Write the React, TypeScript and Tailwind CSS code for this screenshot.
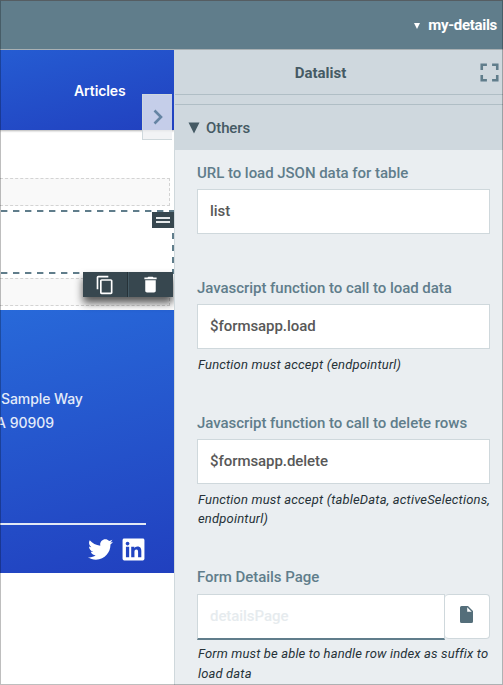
import { ReactNode } from "react";
import { FaLinkedin, FaTwitter } from "react-icons/fa";
import { MdContentCopy, MdDelete, MdFullscreen } from "react-icons/md";

function PlaceholderRow({ className }: { className: string }) {
  return (
    <div className={`w-[170px] border border-l-0 border-dashed border-[#d3d3d3] bg-[#f9f9f9] ${className}`} />
  );
}

function SelectedBlock() {
  return (
    <div className="relative mt-[4px] h-[64px] w-[174px]">
      <div className="absolute inset-x-0 top-0 h-[2px] bg-[repeating-linear-gradient(90deg,transparent_0_1px,#607d8b_1px_7px,#c3ced4_7px_8px,transparent_8px_12px)]" />
      <div className="absolute inset-x-0 bottom-0 h-[2px] bg-[repeating-linear-gradient(90deg,transparent_0_1px,#607d8b_1px_7px,#c3ced4_7px_8px,transparent_8px_12px)]" />
      <div className="absolute inset-y-0 right-0 w-[2px] bg-[repeating-linear-gradient(180deg,#607d8b_0_5px,transparent_5px_11px,#607d8b_11px_12px)]" />
      <div className="absolute top-[2px] right-0 flex h-[16px] w-[22px] flex-col items-center justify-center gap-[2px] bg-[#37474f]">
        <div className="h-[2px] w-[14px] bg-[#e6e9ea]" />
        <div className="h-[2px] w-[14px] bg-[#e6e9ea]" />
      </div>
      <div className="absolute top-[62px] right-[1px] z-10 flex h-[25px] w-[90px] bg-[#37474f] text-white shadow-[0_6px_9px_rgba(0,0,0,0.65)]">
        <div className="flex w-[45px] items-center justify-center border-r border-[#263238]">
          <MdContentCopy size={20} />
        </div>
        <div className="flex w-[45px] items-center justify-center border-l border-[#455a64] pr-[2px]">
          <MdDelete size={21} />
        </div>
      </div>
    </div>
  );
}

function Canvas() {
  return (
    <div className="relative w-[174px] shrink-0 overflow-hidden bg-white font-['Inter',sans-serif]">
      <div className="flex h-[80px] items-center bg-[linear-gradient(165deg,#255cd2_0%,#2140bf_100%)] pl-[74px] text-[14px] font-semibold tracking-[-0.1px] text-white shadow-[0_1px_2px_rgba(0,0,0,0.3)]">
        <span>Articles</span>
      </div>
      <div className="absolute top-[44px] left-[142px] flex h-[46px] w-[30px] items-center justify-center border border-r-0 border-[#cfd8dc] bg-[#eff0f2]/80">
        <svg width="10" height="16" viewBox="0 0 10 16" fill="none" stroke="#6584a3" strokeWidth="2.6">
          <path d="M1.500 1.500 8 8l-6.500 6.500" />
        </svg>
      </div>
      <PlaceholderRow className="mt-[48px] h-[28px]" />
      <SelectedBlock />
      <PlaceholderRow className="mt-[4px] h-[28px]" />
      <div className="mt-[4px] h-[263px] bg-[linear-gradient(165deg,#2869d9_0%,#2140bf_100%)] text-[14px] text-[#e3ebf9]">
        <div className="h-[213px] pt-[77px] leading-[24px] font-medium whitespace-nowrap">
          <div className="pl-px tracking-[-0.08px]">Sample Way</div>
          <div className="-ml-[4px]">A 90909</div>
        </div>
        <div className="h-[2px] w-[146px] bg-[#e2e9f5]" />
        <div className="flex gap-[8px] pt-[12px] pl-[88px] text-white">
          <FaTwitter size={25} />
          <FaLinkedin size={25} />
        </div>
      </div>
    </div>
  );
}

function Field({ label, value, hint, className }: { label: string; value: string; hint?: ReactNode; className: string }) {
  return (
    <div className={className}>
      <div className="h-[25px] text-[15px] leading-[18px] font-medium tracking-[-0.04px] text-[#607d8b]">{label}</div>
      <div className="flex h-[45px] items-center border border-[#cfd8dc] bg-white px-[12px] text-[15px] font-medium tracking-[-0.06px] text-[#585858]">
        {value}
      </div>
      {hint && <div className="pt-[6px] pl-px text-[13px] leading-[19px] tracking-[0.18px] whitespace-nowrap text-[#263238] italic">{hint}</div>}
    </div>
  );
}

function Properties() {
  return (
    <div className="min-w-0 flex-1 overflow-hidden border-l border-[#cfd8dc] bg-[#eaeef1]">
      <div className="flex h-[45px] items-center border-b border-[#b0bec5] bg-[#cfd8de]">
        <div className="w-[292px] pt-[2px] pl-px text-center text-[15px] font-bold text-[#455a64]">Datalist</div>
        <MdFullscreen size={31} className="ml-[7px] shrink-0 translate-x-[2px] text-[#607d8b]" />
      </div>
      <div className="h-[10px] border-b border-[#b0bec5] bg-[#cfd8de]" />
      <div className="flex h-[45px] items-center gap-[6px] bg-[#cfd8de] pl-[13px] text-[15px] font-medium text-[#455a64]">
        <svg width="12" height="12" viewBox="0 0 12 12" fill="currentColor">
          <path d="M.5.5h11L6 11.500z" />
        </svg>
        <span className="pt-[2px] tracking-[-0.1px]">Others</span>
      </div>
      <div className="pl-[22px] pr-[13px]">
        <Field className="h-[115px] pt-[14px]" label="URL to load JSON data for table" value="list" />
        <Field
          className="h-[135px] pt-[14px]"
          label="Javascript function to call to load data"
          value="$formsapp.load"
          hint="Function must accept (endpointurl)"
        />
        <Field
          className="h-[154px] pt-[14px]"
          label="Javascript function to call to delete rows"
          value="$formsapp.delete"
          hint={<>Function must accept (tableData, activeSelections,<br />endpointurl)</>}
        />
        <div className="pt-[14px]">
          <div className="h-[26px] text-[15px] leading-[18px] font-medium tracking-[-0.04px] text-[#607d8b]">Form Details Page</div>
          <div className="flex items-start">
            <div className="flex h-[46px] w-[248px] items-center border border-b-2 border-[#cfd8dc] border-b-[#607d8b] bg-white px-[12px] pb-[1px] text-[15px] font-medium tracking-[-0.06px] text-[#e6ebee]">
              detailsPage
            </div>
            <div className="flex h-[45px] w-[45px] items-center justify-center rounded-[4px] border border-l-0 border-[#cfd8dc] bg-white pr-[2px] pb-[4px]">
              <svg width="13" height="17" viewBox="0 0 13 17">
                <path fill="#546e7a" d="M1.500 0H8l5 5v10.500a1.500 1.500 0 0 1-1.500 1.500h-10A1.500 1.500 0 0 1 0 15.500V1.500A1.500 1.500 0 0 1 1.500 0zM7.200 1.300v4.500h4.500z" fillRule="evenodd" />
              </svg>
            </div>
          </div>
          <div className="pt-[4px] pl-px text-[13px] leading-[20px] tracking-[0.14px] whitespace-nowrap text-[#263238] italic">
            Form must be able to handle row index as suffix to<br />load data
          </div>
        </div>
      </div>
    </div>
  );
}

export default function App() {
  return (
    <div className="relative flex h-[685px] w-[503px] flex-col overflow-hidden bg-white font-['Roboto',sans-serif]">
      <div className="flex h-[50px] shrink-0 items-center justify-end gap-[9px] border-b border-[#a9b0b3] bg-[#607d8b] pr-[6px] text-[15px] font-bold text-white">
        <svg width="6" height="6" viewBox="0 0 6 6" fill="currentColor" className="translate-x-px translate-y-px">
          <path d="M0 0h6L3 6z" />
        </svg>
        <span className="pt-px tracking-[-0.3px]">my-details</span>
      </div>
      <div className="flex h-[635px]">
        <Canvas />
        <Properties />
      </div>
      <div className="pointer-events-none absolute inset-0 z-20 border border-black/25 border-t-[#555d62]" />
    </div>
  );
}
